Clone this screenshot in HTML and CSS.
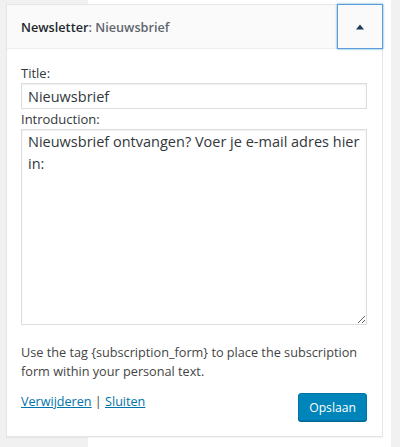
FILE: index.html
```html
<!DOCTYPE html>
<html lang="nl">
  <head>
    <meta charset="utf-8" />
    <meta name="viewport" content="width=device-width, initial-scale=1" />
    <link rel="stylesheet" href="styles.css">
    <title>Newsletter widget</title>
  </head>
  <body>
    <div class="page">
      <!-- Widget kaart -->
      <div class="widget">
        <div class="widget__top">
          <h3 class="widget__title">Newsletter<span class="widget__subtitle">: Nieuwsbrief</span></h3>
          <button class="widget__toggle" type="button" aria-label="Inklappen">
            <svg viewBox="0 0 10 10" width="10" height="10">
              <polygon points="5,2.5 9,7.5 1,7.5" fill="#1f3b53" />
            </svg>
          </button>
        </div>

        <div class="widget__inside">
          <p class="field">
            <label class="field__label" for="nl-title">Title:</label>
            <input class="field__input" id="nl-title" type="text" value="Nieuwsbrief" />
          </p>
          <p class="field">
            <label class="field__label" for="nl-intro">Introduction:</label>
            <textarea class="field__textarea" id="nl-intro">Nieuwsbrief ontvangen? Voer je e-mail adres hier in:</textarea>
          </p>
          <p class="widget__help">Use the tag {subscription_form} to place the subscription form within your personal text.</p>

          <div class="widget__controls">
            <div class="widget__links">
              <a href="#">Verwijderen</a> | <a href="#">Sluiten</a>
            </div>
            <button class="button-primary" type="button">Opslaan</button>
          </div>
        </div>
      </div>
    </div>
  </body>
</html>
```

FILE: styles.css
```css
/* Basis */
*, *::before, *::after {
  box-sizing: border-box;
}

html, body {
  margin: 0;
  padding: 0;
  height: 100%;
  font-family: 'Open Sans', 'Liberation Sans', sans-serif;
  font-size: 13px;
  color: #444;
  -webkit-font-smoothing: antialiased;
}

/* Achtergrond: grijze kolommen met een witte zijbalk */
.page {
  min-height: 100%;
  padding: 4px 17px 0 6px;
  background: linear-gradient(90deg, #f1f1f1 0, #f1f1f1 88px, #fff 88px, #fff 391px, #f1f1f1 391px);
}

/* Widget */
.widget {
  width: 377px;
  background: #fff;
  border: 1px solid #e5e5e5;
  box-shadow: 0 1px 1px rgba(0, 0, 0, 0.04);
}

.widget__top {
  display: flex;
  align-items: stretch;
  background: #fafafa;
  border-bottom: 1px solid #eee;
  height: 44px;
}

.widget__title {
  flex: 1;
  margin: 0;
  padding: 1px 14px 0;
  display: flex;
  align-items: center;
  font-size: 12.7px;
  font-weight: 600;
  color: #23282d;
}

.widget__subtitle {
  color: #5f666d;
}

.widget__toggle {
  width: 46px;
  margin: -1px -1px 0 0;
  height: 45px;
  display: flex;
  align-items: center;
  justify-content: center;
  background: #fafafa;
  border: 1px solid #5b9dd9;
  box-shadow: 0 0 2px rgba(30, 140, 190, 0.8);
  padding: 0;
}

.widget__inside {
  padding: 14px 15px 15px 14px;
}

/* Velden */
.field {
  margin: 0;
}

.field__label {
  display: block;
  line-height: 20px;
  color: #32373c;
}

.field__input,
.field__textarea {
  display: block;
  width: 100%;
  margin: 0;
  padding: 2px 6px;
  font-family: 'Open Sans', 'Liberation Sans', sans-serif;
  font-size: 14.5px;
  color: #32373c;
  border: 1px solid #ddd;
  box-shadow: inset 0 1px 2px rgba(0, 0, 0, 0.07);
  background: #fff;
}

.field__input {
  height: 26px;
}

.field__textarea {
  height: 196px;
  line-height: 22px;
  padding: 1px 2px 2px 6px;
  resize: vertical;
}

.widget__help {
  margin: 18px 0 0;
  font-size: 12.7px;
  line-height: 19px;
}

/* Acties */
.widget__controls {
  display: flex;
  justify-content: space-between;
  align-items: flex-start;
  margin-top: 12px;
}

.widget__links {
  font-size: 12.6px;
  line-height: 17px;
}

.widget__links a {
  color: #0073aa;
}

.button-primary {
  height: 28px;
  padding: 0 10px;
  font-family: 'Open Sans', 'Liberation Sans', sans-serif;
  font-size: 12.2px;
  color: #fff;
  background: #0085ba;
  border: 1px solid #0073aa;
  border-radius: 3px;
  box-shadow: 0 1px 0 #006799;
}
```
